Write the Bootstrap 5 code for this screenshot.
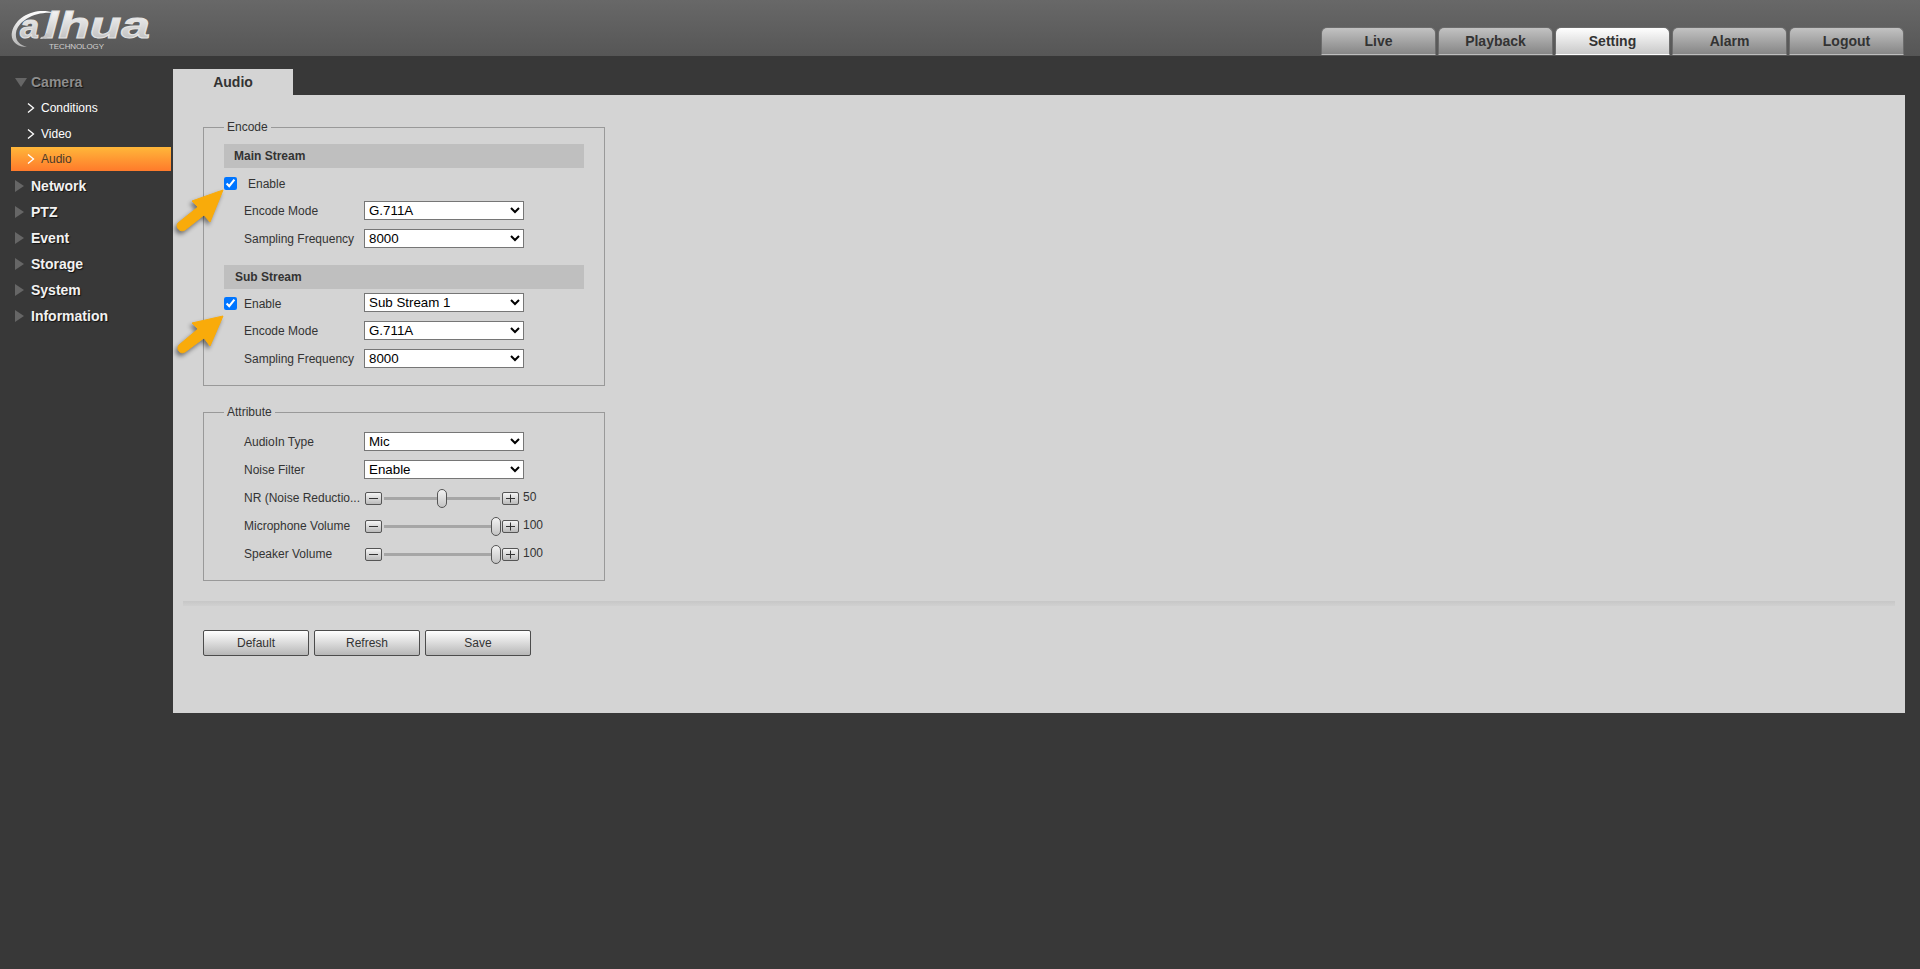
<!DOCTYPE html>
<html lang="en">

<head>
    <meta charset="UTF-8">
    <meta name="viewport" content="width=device-width, initial-scale=1.0">
    <title>Audio Setting</title>
    <link href="https://cdn.jsdelivr.net/npm/bootstrap@5.3.0/dist/css/bootstrap.min.css" rel="stylesheet">
    <style>
        body {
            background: #383838;
            font-family: "Liberation Sans", Arial, sans-serif;
            font-size: 12px;
            color: #333;
            min-height: 969px;
        }

        /* header */
        .top-head {
            height: 56px;
            background: linear-gradient(#686868, #565656);
            padding-right: 16px;
        }

        .brand-logo {
            margin: 8px 0 0 10px;
            display: block;
        }

        .top-tab {
            width: 115px;
            height: 28px;
            padding: 0;
            margin-bottom: 1px;
            line-height: 27px;
            font-size: 14px;
            font-weight: 700;
            color: #333;
            background: linear-gradient(#c2c2c2, #868686);
            border: 1px solid #6c6c6c;
            border-bottom: 1px solid #bdbdbd;
            border-radius: 6px 6px 0 0;
        }

        .top-tab + .top-tab {
            margin-left: 2px;
        }

        .top-tab.on {
            background: linear-gradient(#fff, #c9c9c9);
            border-bottom-color: #fff;
        }

        /* left menu */
        .side-menu {
            width: 173px;
            flex: none;
            padding: 13px 0 0 11px;
        }

        .menu-main,
        .menu-sub {
            width: 160px;
            height: 26px;
        }

        .menu-main {
            font-size: 14px;
            font-weight: 700;
            color: #f2f2f2;
            text-shadow: 1px 1px 1px #111;
        }

        .menu-main.open {
            color: #8d8d8d;
        }

        .menu-sub {
            color: #fff;
        }

        .menu-sub.on {
            height: 24px;
            margin-bottom: 2px;
            color: #4a3a2a;
            background: linear-gradient(#ffb73a, #ff7a2b);
        }

        .tri-icon {
            width: 16px;
            margin-left: 4px;
            flex: none;
        }

        .chev-icon {
            width: 30px;
            padding-left: 16px;
            flex: none;
        }

        /* content */
        .main-area {
            padding: 13px 15px 0 0;
        }

        .page-tab {
            width: 120px;
            height: 26px;
            line-height: 26px;
            text-align: center;
            font-size: 14px;
            font-weight: 700;
            background: #d4d4d4;
        }

        .page-panel {
            background: #d4d4d4;
            height: 618px;
            padding: 25px 30px 0;
        }

        .cfg-box {
            position: relative;
            width: 402px;
            margin: 0;
            padding: 10px 20px 12px;
            border: 1px solid #999;
        }

        .cfg-box legend {
            float: none;
            width: auto;
            margin: 0;
            padding: 0 3px;
            font-size: 12px;
            line-height: 14px;
            color: #333;
        }

        .attr-box {
            margin-top: 19px;
            padding: 9px 20px 12px;
        }

        .stream-bar {
            height: 24px;
            line-height: 24px;
            padding-left: 10px;
            background: #bfbfbf;
            font-weight: 700;
        }

        .stream-bar.sub-bar {
            padding-left: 11px;
        }

        .rows-main {
            margin-top: 1px;
            margin-bottom: 12px;
        }

        .cfg-row {
            height: 28px;
        }

        .cfg-row input[type=checkbox] {
            width: 13px;
            height: 13px;
            margin: 0;
            flex: none;
        }

        .row-label {
            width: 140px;
            padding-left: 20px;
            flex: none;
        }

        .row-label.with-check {
            padding: 2px 0 0 7px;
            width: 127px;
        }

        .cfg-select {
            width: 160px;
            height: 19px;
            padding: 0;
            font-size: 13.33px;
            color: #000;
            background-color: #fff;
            margin-top: -2px;
        }

        .step-btn {
            width: 17px;
            height: 13px;
            flex: none;
            border: 1px solid #555;
            border-radius: 2px;
            background: linear-gradient(#f5f5f5, #bbb);
            display: block;
        }

        .step-minus {
            margin-left: 1px;
        }

        .slide-track {
            position: relative;
            width: 116px;
            height: 3px;
            margin: 0 2px;
            background: #a6a6a6;
            flex: none;
        }

        .slide-thumb {
            position: absolute;
            top: -8px;
            width: 10px;
            height: 19px;
            margin-left: -5px;
            border: 1px solid #555;
            border-radius: 5px;
            background: linear-gradient(#f2f2f2, #c4c4c4);
        }

        .slide-val {
            margin-left: 4px;
            margin-top: -3px;
        }

        .line-sep {
            height: 5px;
            margin: 20px -20px 24px;
            background: linear-gradient(#c7c7c7, #d0d0d0);
        }

        .act-row {
            gap: 5px;
        }

        .act-btn {
            width: 106px;
            height: 26px;
            padding: 0;
            font-size: 12px;
            line-height: 24px;
            color: #333;
            background: linear-gradient(#fff, #b7b7b7);
            border: 1px solid #4c4c4c;
            border-radius: 2px;
        }

        .hint-arrow {
            position: absolute;
            left: -28px;
            filter: drop-shadow(-2px 3px 2px rgba(0, 0, 0, .45));
        }

        .arrow-one {
            top: 52px;
        }

        .arrow-two {
            top: 178px;
        }
    </style>
</head>

<body>
    <!-- Header -->
    <header class="top-head d-flex justify-content-between">
        <svg class="brand-logo" width="150" height="44" viewBox="0 0 150 44">
            <defs>
                <linearGradient id="logoFill" x1="0" y1="0" x2="0" y2="1">
                    <stop offset="0" stop-color="#fff"/>
                    <stop offset="1" stop-color="#b5b5b5"/>
                </linearGradient>
            </defs>
            <path d="M44 5C28-1 6 7 2 24c-2 9 5 15 15 15-7-2-12-6-11-14C8 12 26 3 44 5z" fill="url(#logoFill)"/>
            <text x="10" y="30" font-family="Liberation Sans" font-weight="700" font-style="italic" font-size="34" fill="url(#logoFill)" stroke="#e4e4e4" stroke-width="1">a</text>
            <text x="34" y="30" font-family="Liberation Sans" font-weight="700" font-style="italic" font-size="37" fill="url(#logoFill)" stroke="#e4e4e4" stroke-width="1" textLength="106" lengthAdjust="spacingAndGlyphs">lhua</text>
            <path d="M36 25c-1 3-3 4-5 4l-1 2c5 0 8-1 10-4z" fill="#c4c4c4"/>
            <text x="39" y="41" font-family="Liberation Sans" font-size="8" fill="#d0d0d0" textLength="55">TECHNOLOGY</text>
        </svg>
        <div class="d-flex align-items-end">
            <a class="btn top-tab" href="#">Live</a>
            <a class="btn top-tab" href="#">Playback</a>
            <a class="btn top-tab on" href="#">Setting</a>
            <a class="btn top-tab" href="#">Alarm</a>
            <a class="btn top-tab" href="#">Logout</a>
        </div>
    </header>

    <div class="d-flex">
        <!-- Left menu -->
        <nav class="side-menu">
            <div class="menu-main open d-flex align-items-center">
                <svg class="tri-icon" height="9" viewBox="0 0 16 9"><path d="M0 0h12L6 9z" fill="#666"/></svg>Camera
            </div>
            <div class="menu-sub d-flex align-items-center">
                <span class="chev-icon"><svg class="d-block" width="8" height="10" viewBox="0 0 8 10"><path d="M1 .5 6.5 5 1 9.500" fill="none" stroke="#fff" stroke-width="1.300"/></svg></span>Conditions
            </div>
            <div class="menu-sub d-flex align-items-center">
                <span class="chev-icon"><svg class="d-block" width="8" height="10" viewBox="0 0 8 10"><path d="M1 .5 6.5 5 1 9.500" fill="none" stroke="#fff" stroke-width="1.300"/></svg></span>Video
            </div>
            <div class="menu-sub on d-flex align-items-center">
                <span class="chev-icon"><svg class="d-block" width="8" height="10" viewBox="0 0 8 10"><path d="M1 .5 6.500 5 1 9.500" fill="none" stroke="#fff" stroke-width="1.300"/></svg></span>Audio
            </div>
            <div class="menu-main d-flex align-items-center">
                <svg class="tri-icon" height="12" viewBox="0 0 16 12"><path d="M0 0l9 6-9 6z" fill="#666"/></svg>Network
            </div>
            <div class="menu-main d-flex align-items-center">
                <svg class="tri-icon" height="12" viewBox="0 0 16 12"><path d="M0 0l9 6-9 6z" fill="#666"/></svg>PTZ
            </div>
            <div class="menu-main d-flex align-items-center">
                <svg class="tri-icon" height="12" viewBox="0 0 16 12"><path d="M0 0l9 6-9 6z" fill="#666"/></svg>Event
            </div>
            <div class="menu-main d-flex align-items-center">
                <svg class="tri-icon" height="12" viewBox="0 0 16 12"><path d="M0 0l9 6-9 6z" fill="#666"/></svg>Storage
            </div>
            <div class="menu-main d-flex align-items-center">
                <svg class="tri-icon" height="12" viewBox="0 0 16 12"><path d="M0 0l9 6-9 6z" fill="#666"/></svg>System
            </div>
            <div class="menu-main d-flex align-items-center">
                <svg class="tri-icon" height="12" viewBox="0 0 16 12"><path d="M0 0l9 6-9 6z" fill="#666"/></svg>Information
            </div>
        </nav>

        <!-- Content -->
        <main class="main-area flex-grow-1">
            <div class="page-tab">Audio</div>
            <div class="page-panel">
                <fieldset class="cfg-box">
                    <legend>Encode</legend>
                    <div class="stream-bar">Main Stream</div>
                    <div class="rows-main">
                        <div class="cfg-row d-flex align-items-center">
                            <input type="checkbox" checked>
                            <span class="row-label with-check ms-1">Enable</span>
                        </div>
                        <div class="cfg-row d-flex align-items-center">
                            <span class="row-label">Encode Mode</span>
                            <select class="cfg-select"><option>G.711A</option></select>
                        </div>
                        <div class="cfg-row d-flex align-items-center">
                            <span class="row-label">Sampling Frequency</span>
                            <select class="cfg-select"><option>8000</option></select>
                        </div>
                    </div>
                    <div class="stream-bar sub-bar">Sub Stream</div>
                    <div>
                        <div class="cfg-row d-flex align-items-center">
                            <input type="checkbox" checked>
                            <span class="row-label with-check">Enable</span>
                            <select class="cfg-select"><option>Sub Stream 1</option></select>
                        </div>
                        <div class="cfg-row d-flex align-items-center">
                            <span class="row-label">Encode Mode</span>
                            <select class="cfg-select"><option>G.711A</option></select>
                        </div>
                        <div class="cfg-row d-flex align-items-center">
                            <span class="row-label">Sampling Frequency</span>
                            <select class="cfg-select"><option>8000</option></select>
                        </div>
                    </div>
                    <svg class="hint-arrow arrow-one" width="50" height="50" viewBox="0 0 50 50">
                        <path d="M47 4 16 15l6 6L2 37c-3 4 2 10 7 7l19-15 6 7z" fill="#f9ab0a" stroke="#f9ab0a" stroke-linejoin="round"/>
                    </svg>
                    <svg class="hint-arrow arrow-two" width="50" height="50" viewBox="0 0 50 50">
                        <path d="M47 4 16 11l6 6L3 33c-3 4 1 10 6 7l19-14 6 8z" fill="#f9ab0a" stroke="#f9ab0a" stroke-linejoin="round"/>
                    </svg>
                </fieldset>

                <fieldset class="cfg-box attr-box">
                    <legend>Attribute</legend>
                    <div class="cfg-row d-flex align-items-center">
                        <span class="row-label">AudioIn Type</span>
                        <select class="cfg-select"><option>Mic</option></select>
                    </div>
                    <div class="cfg-row d-flex align-items-center">
                        <span class="row-label">Noise Filter</span>
                        <select class="cfg-select"><option>Enable</option></select>
                    </div>
                    <div class="cfg-row d-flex align-items-center" id="sliderNr"></div>
                    <div class="cfg-row d-flex align-items-center" id="sliderMic"></div>
                    <div class="cfg-row d-flex align-items-center" id="sliderSpk"></div>
                </fieldset>

                <div class="line-sep"></div>

                <div class="d-flex act-row">
                    <button type="button" class="btn act-btn">Default</button>
                    <button type="button" class="btn act-btn">Refresh</button>
                    <button type="button" class="btn act-btn">Save</button>
                </div>
            </div>
        </main>
    </div>

    <script src="https://cdn.jsdelivr.net/npm/bootstrap@5.3.0/dist/js/bootstrap.bundle.min.js"></script>
    <script>
        // Slider rows share one template, only label and value differ
        const minusIcon = '<svg class="d-block" width="15" height="11" viewBox="0 0 15 11"><path d="M3 5.500h9" stroke="#333"/></svg>';
        const plusIcon = '<svg class="d-block" width="15" height="11" viewBox="0 0 15 11"><path d="M3 5.500h9M7.500 1.500v8" stroke="#333"/></svg>';

        function fillSlider(id, label, value) {
            const left = 4 + value / 100 * 108;
            document.getElementById(id).innerHTML =
                '<span class="row-label">' + label + '</span>' +
                '<span class="step-btn step-minus">' + minusIcon + '</span>' +
                '<span class="slide-track"><span class="slide-thumb" style="left:' + left + 'px"></span></span>' +
                '<span class="step-btn">' + plusIcon + '</span>' +
                '<span class="slide-val">' + value + '</span>';
        }

        fillSlider("sliderNr", "NR (Noise Reductio...", 50);
        fillSlider("sliderMic", "Microphone Volume", 100);
        fillSlider("sliderSpk", "Speaker Volume", 100);
    </script>
</body>

</html>
